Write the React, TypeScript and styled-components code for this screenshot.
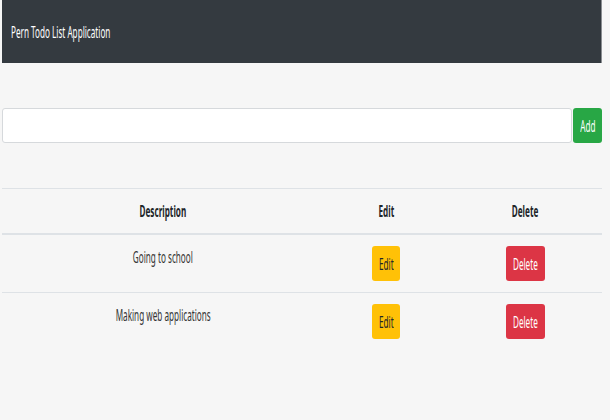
import React from 'react';
import styled, { createGlobalStyle } from 'styled-components';

const todos = [
    { id: 1, description: 'Going to school' },
    { id: 2, description: 'Making web applications' },
];

const GlobalStyle = createGlobalStyle`
    body {
        margin: 0;
        background: #f6f6f6;
        font-family: "Noto Sans", "Open Sans", sans-serif;
        font-size: 16px;
        color: #212529;
    }
`

const App = () => {
    return (
        <>
            <GlobalStyle />
            <StPage>
                <StNavbar>
                    <StSqueeze origin="left">Pern Todo List Application</StSqueeze>
                </StNavbar>
                <StForm onSubmit={(e) => e.preventDefault()}>
                    <StInput type="text" />
                    <StButton type="submit" color="#28a745" width={29}>
                        <StSqueeze>Add</StSqueeze>
                    </StButton>
                </StForm>
                <StTable>
                    <colgroup>
                        <col style={{ width: 322 }} />
                        <col style={{ width: 124 }} />
                        <col style={{ width: 154 }} />
                    </colgroup>
                    <thead>
                        <tr>
                            <StTh><StSqueeze>Description</StSqueeze></StTh>
                            <StTh><StSqueeze>Edit</StSqueeze></StTh>
                            <StTh><StSqueeze>Delete</StSqueeze></StTh>
                        </tr>
                    </thead>
                    <tbody>
                        {todos.map((todo) => (
                            <tr key={todo.id}>
                                <StTd><StSqueeze>{todo.description}</StSqueeze></StTd>
                                <StTd>
                                    <StButton color="#ffc107" text="#212529" width={28}>
                                        <StSqueeze>Edit</StSqueeze>
                                    </StButton>
                                </StTd>
                                <StTd>
                                    <StButton color="#dc3545" width={39}>
                                        <StSqueeze>Delete</StSqueeze>
                                    </StButton>
                                </StTd>
                            </tr>
                        ))}
                    </tbody>
                </StTable>
            </StPage>
        </>
    );
};

// the reference is squashed sideways, so text is narrowed in place
const StSqueeze = styled.span<{ origin?: string }>`
    display: inline-block;
    transform: scaleX(0.51);
    transform-origin: ${props => props.origin || 'center'};
    white-space: nowrap;
`

const StPage = styled.div`
    width: 600px;
    margin-left: 2px;
`

const StNavbar = styled.nav`
    display: flex;
    align-items: center;
    height: 63px;
    padding-left: 9px;
    background: #343a40;
    color: #ffffff;
    font-size: 16px;
    border-right: 1px solid #8a8d91;
`

const StForm = styled.form`
    display: flex;
    gap: 1px;
    margin-top: 45px;
`

const StInput = styled.input`
    flex: 1;
    height: 35px;
    box-sizing: border-box;
    border: 1px solid #d6d9dc;
    border-radius: 3px;
    background: #ffffff;
    outline: none;
`

const StButton = styled.button<{ color: string; text?: string; width: number }>`
    display: inline-flex;
    align-items: center;
    justify-content: center;
    width: ${props => props.width}px;
    height: 35px;
    padding: 0;
    border: none;
    border-radius: 3px;
    background: ${props => props.color};
    color: ${props => props.text || '#ffffff'};
    font-family: inherit;
    font-size: 16px;
    overflow: visible;
`

const StTable = styled.table`
    width: 600px;
    margin-top: 45px;
    border-collapse: collapse;
    table-layout: fixed;
    border-top: 1px solid #dee2e6;
`

const StTh = styled.th`
    height: 44px;
    padding: 0;
    text-align: center;
    font-weight: 700;
    border-bottom: 2px solid #dee2e6;
`

const StTd = styled.td`
    padding: 11px 0;
    text-align: center;
    vertical-align: top;
    line-height: 22px;
    color: #333;
    border-bottom: 1px solid #dee2e6;

    tbody tr:last-child & {
        border-bottom: none;
    }
`

export default App;
